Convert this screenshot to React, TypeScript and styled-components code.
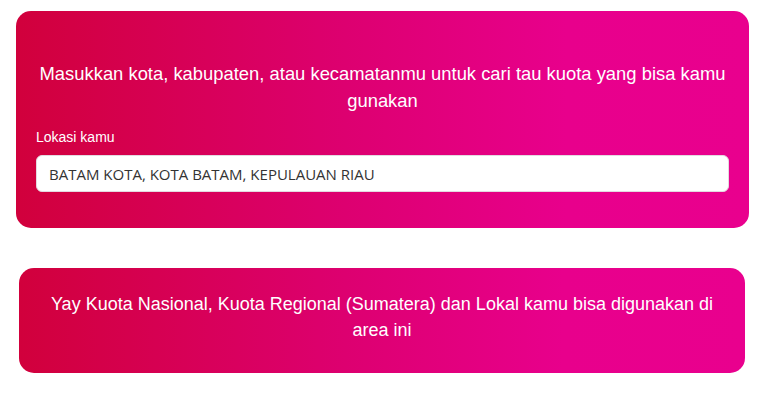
import React from "react";
import styled, { createGlobalStyle } from "styled-components";

const GlobalStyle = createGlobalStyle`
  body {
    margin: 0;
    background: #fff;
    font-family: "Liberation Sans", Arial, sans-serif;
  }
`;

const Page = styled.main`
  width: 758px;
  display: flex;
  flex-direction: column;
  padding-top: 11px;
`;

const Card = styled.section`
  border-radius: 15px;
  background: linear-gradient(90deg, #d1003c 0%, #dd0070 45%, #e8008c 75%, #e9008e 100%);
  color: #fff;
  text-align: center;
`;

const SearchCard = styled(Card)`
  margin: 0 9px 0 16px;
  padding: 49px 20px 36px 20px;
`;

const ResultCard = styled(Card)`
  margin: 40px 13px 0 19px;
  padding: 23px 26px 30px 26px;
`;

const Title = styled.p`
  margin: 0 -6px 15px -6px;
  font-size: 18.4px;
  line-height: 27px;
`;

const Message = styled.p`
  margin: 0;
  font-size: 18px;
  line-height: 26px;
`;

const Field = styled.label`
  display: flex;
  flex-direction: column;
  text-align: left;
  gap: 9px;
`;

const Label = styled.span`
  font-size: 14px;
  line-height: 17px;
`;

const Input = styled.input`
  box-sizing: border-box;
  width: 100%;
  height: 37px;
  border: 1px solid #e3d9e0;
  border-radius: 6px;
  background: #fff;
  padding: 0 12px;
  font-family: "Open Sans", sans-serif;
  font-size: 15px;
  color: #333;
  outline: none;
`;

export default function App() {
  return (
    <>
      <GlobalStyle />
      <Page>
        <SearchCard>
          <Title>
            Masukkan kota, kabupaten, atau kecamatanmu untuk cari tau kuota yang bisa kamu gunakan
          </Title>
          <Field>
            <Label>Lokasi kamu</Label>
            <Input readOnly value="BATAM KOTA, KOTA BATAM, KEPULAUAN RIAU" />
          </Field>
        </SearchCard>
        <ResultCard>
          <Message>
            Yay Kuota Nasional, Kuota Regional (Sumatera) dan Lokal kamu bisa digunakan di area ini
          </Message>
        </ResultCard>
      </Page>
    </>
  );
}
